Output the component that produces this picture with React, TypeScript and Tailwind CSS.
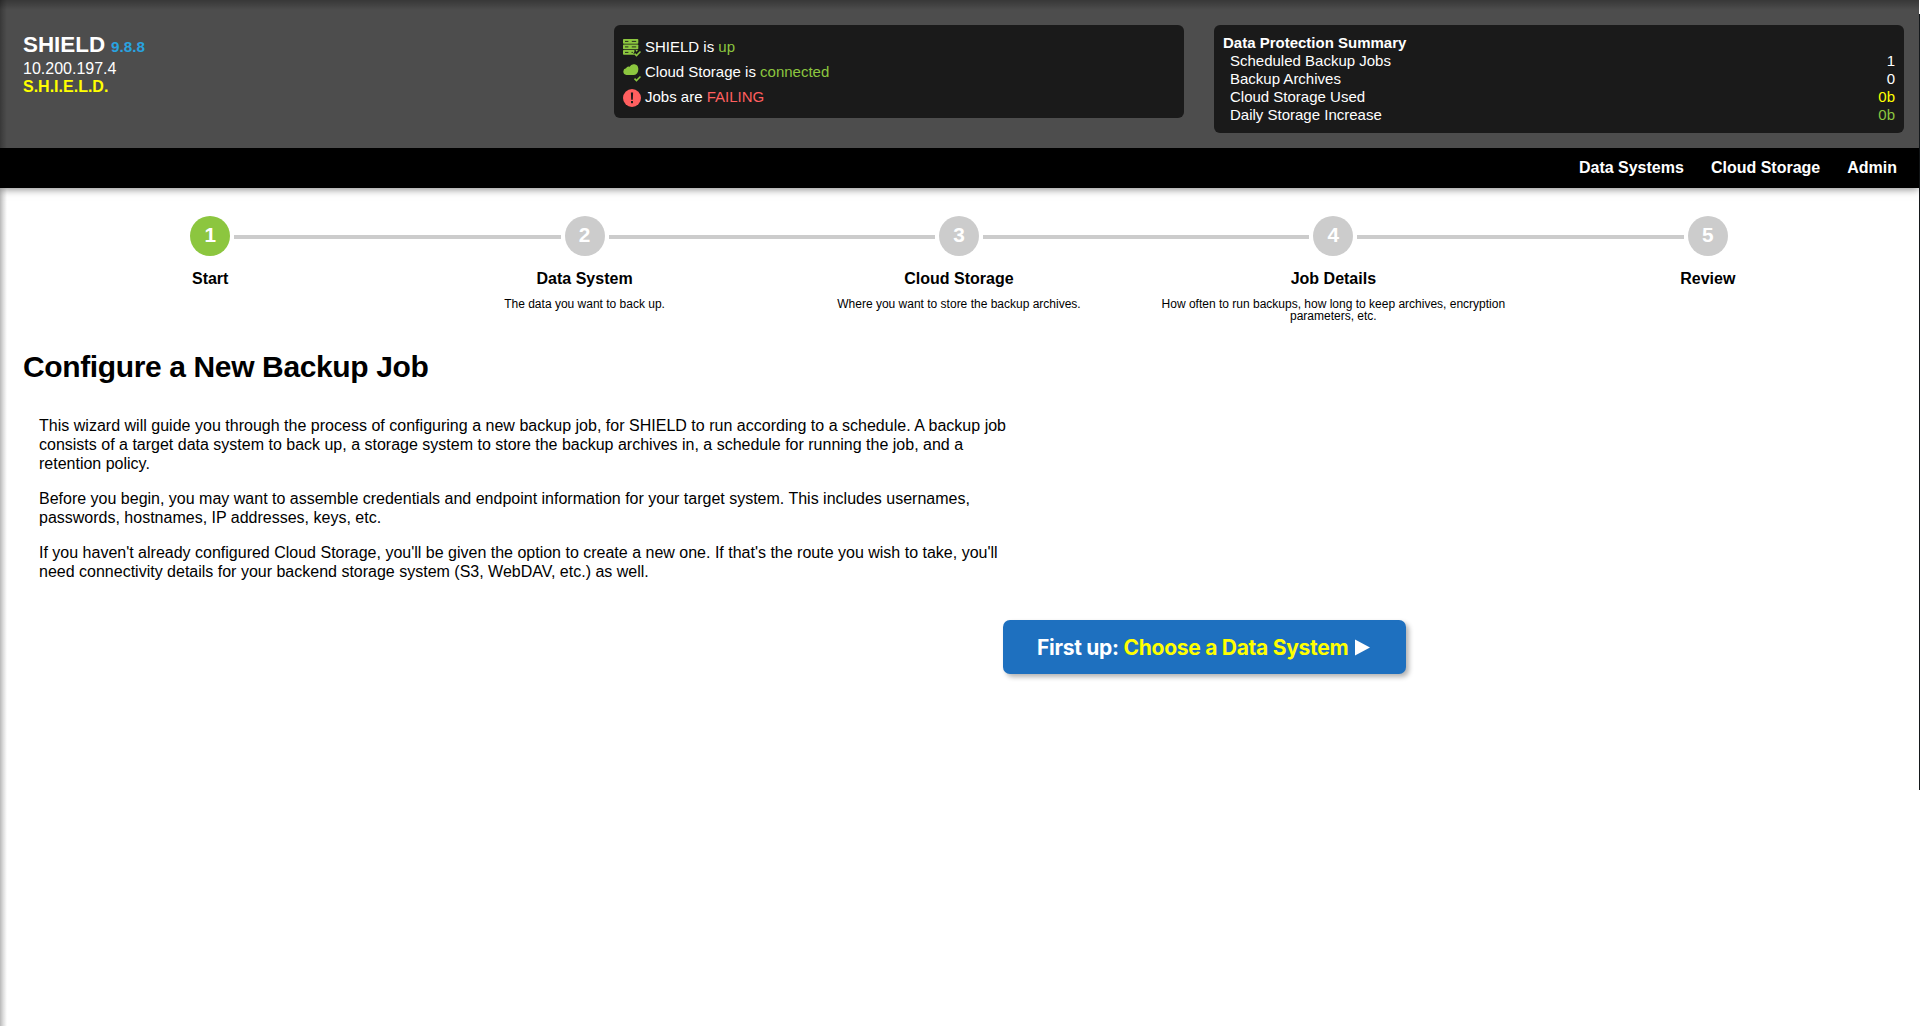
const steps = [
  { title: 'Start', note: '' },
  { title: 'Data System', note: 'The data you want to back up.' },
  { title: 'Cloud Storage', note: 'Where you want to store the backup archives.' },
  {
    title: 'Job Details',
    note: 'How often to run backups, how long to keep archives, encryption parameters, etc.',
  },
  { title: 'Review', note: '' },
];

const summary = [
  { label: 'Scheduled Backup Jobs', value: '1', color: 'text-white' },
  { label: 'Backup Archives', value: '0', color: 'text-white' },
  { label: 'Cloud Storage Used', value: '0b', color: 'text-[#ffff00]' },
  { label: 'Daily Storage Increase', value: '0b', color: 'text-[#8cc63f]' },
];

function Tick() {
  return <path d="M11.5 14.6l2 2 4-4.1" fill="none" stroke="#8cc63f" strokeWidth="1.5" />;
}

function ServerIcon() {
  return (
    <svg width="18" height="18" viewBox="0 0 18 18" className="shrink-0">
      <g fill="#8cc63f">
        <rect x="0" y="0" width="15.3" height="4.8" rx="0.8" />
        <rect x="0" y="5.5" width="15.3" height="4.8" rx="0.8" />
        <path d="M.8 11h10.6v2l-1 1.2 1 1.6H.8a.8.8 0 0 1-.8-.8v-3.2a.8.8 0 0 1 .8-.8z" />
        <path d="M12.6 11h2v.8l-1.3 1z" />
      </g>
      <g stroke="#1a1a1a" strokeWidth="0.9">
        <path d="M2 2.4h3.4M8.8 2.4h4.4M2 7.9h3.4M8.8 7.9h4.4M2 13.4h3.4M8.5 13.4h1.4" />
      </g>
      <Tick />
    </svg>
  );
}

function CloudIcon() {
  return (
    <svg width="18" height="18" viewBox="0 0 18 18" className="shrink-0">
      <path
        d="M3.4 11A3.4 3.4 0 0 1 3 4.3 A3 3 0 0 1 6.6 2.8 A4.6 4.6 0 0 1 15.3 4.4 C15.6 8.2 13.8 10.6 11 11z"
        fill="#8cc63f"
      />
      <Tick />
    </svg>
  );
}

function AlertIcon() {
  return (
    <svg width="18" height="18" viewBox="0 0 18 18" className="shrink-0">
      <circle cx="9" cy="9" r="9" fill="#ff5f5f" />
      <path d="M7.9 3.6h2.2l-.3 7.2H8.2z" fill="#1a1a1a" />
      <rect x="8" y="12" width="2" height="2.2" fill="#1a1a1a" />
    </svg>
  );
}

function Header() {
  return (
    <header className="relative z-10 flex h-[148px] items-start bg-[#4d4d4d] bg-[linear-gradient(to_right,rgba(0,0,0,0.28),rgba(0,0,0,0.14)_3px,transparent_7px),linear-gradient(to_bottom,rgba(0,0,0,0.28),rgba(0,0,0,0.14)_5px,transparent_10px)] pl-[23px] pr-[15px] pt-[25px] text-white">
      <div className="w-[591px] pt-[6px] text-[16px] leading-[18px]">
        <div className="flex h-[29px] items-baseline leading-[28px]">
          <span className="text-[22.4px] font-bold">SHIELD</span>
          <span className="ml-[6px] text-[15.2px] font-bold text-[#29a3e0]">9.8.8</span>
        </div>
        <div>10.200.197.4</div>
        <div className="font-bold text-[#ffff00]">S.H.I.E.L.D.</div>
      </div>
      <div className="flex h-[93px] w-[570px] flex-col rounded-[6px] bg-[#1a1a1a] pl-[9px] pt-[9px] text-[15px]">
        <div className="flex h-[25px] items-center gap-[4px]">
          <span className="mt-[3px]"><ServerIcon /></span>
          <span className="mt-[2px]">SHIELD is <span className="text-[#8cc63f]">up</span></span>
        </div>
        <div className="flex h-[25px] items-center gap-[4px]">
          <span className="mt-[3px]"><CloudIcon /></span>
          <span className="mt-[2px]">Cloud Storage is <span className="text-[#8cc63f]">connected</span></span>
        </div>
        <div className="flex h-[25px] items-center gap-[4px]">
          <span className="mt-[2px]"><AlertIcon /></span>
          <span className="mt-[2px]">Jobs are <span className="text-[#ff5f5f]">FAILING</span></span>
        </div>
      </div>
      <div className="ml-[30px] h-[108px] w-[690px] rounded-[6px] bg-[#1a1a1a] px-[9px] pt-[9px] text-[15px] leading-[18px]">
        <div className="font-bold">Data Protection Summary</div>
        {summary.map((s) => (
          <div key={s.label} className="flex justify-between pl-[7px]">
            <span>{s.label}</span>
            <span className={s.color}>{s.value}</span>
          </div>
        ))}
      </div>
    </header>
  );
}

function Steps() {
  return (
    <ol className="ml-[23px] flex h-[141px] w-[1872px] pt-[28px]">
      {steps.map((s, i) => (
        <li key={s.title} className="flex w-1/5 flex-col items-center text-center">
          <div className="flex w-full items-center">
            <span className={i > 0 ? 'mt-[2px] h-[4px] flex-1 bg-[#cccccc]' : 'flex-1'} />
            <span
              className={
                'mx-[4px] flex size-[40px] items-center justify-center rounded-full pb-[2px] text-[20.8px] font-bold text-white ' +
                (i === 0 ? 'bg-[#8cc63f]' : 'bg-[#cccccc]')
              }
            >
              {i + 1}
            </span>
            <span className={i < steps.length - 1 ? 'mt-[2px] h-[4px] flex-1 bg-[#cccccc]' : 'flex-1'} />
          </div>
          <div className="mt-[14px] text-[16px] font-bold leading-[18px]">{s.title}</div>
          <div className="mt-[10px] w-[350px] text-[12px] leading-[12px]">{s.note}</div>
        </li>
      ))}
    </ol>
  );
}

export default function App() {
  return (
    <div className="flex h-[1026px] w-[1920px] overflow-hidden bg-white font-['Liberation_Sans',Arial,sans-serif] text-black">
      <div className="flex w-[1919px] flex-col">
        <Header />
        <nav className="relative flex h-[40px] shrink-0 items-center justify-end gap-[27px] bg-black pr-[22px] text-[16px] font-bold text-white shadow-[0_1px_8px_rgba(0,0,0,0.5)]">
          <a>Data Systems</a>
          <a>Cloud Storage</a>
          <a>Admin</a>
        </nav>
        <main className="flex-1 bg-[linear-gradient(to_right,rgba(0,0,0,0.28),rgba(0,0,0,0.14)_3px,transparent_7px)]">
          <Steps />
          <h1 className="ml-[23px] mt-[20px] text-[30px] font-bold leading-[36px] tracking-[-0.37px]">Configure a New Backup Job</h1>
          <div className="ml-[39px] mt-[31px] flex w-[980px] flex-col gap-[16px] text-[16px] leading-[19px]">
            <p>
              <span className="tracking-[0.015px]">This wizard will guide you through the process of configuring a new backup job, for SHIELD to run according to a schedule. A backup job</span>
              <br />
              consists of a target data system to back up, a storage system to store the backup archives in, a schedule for running the job, and a
              <br />
              retention policy.
            </p>
            <p>
              Before you begin, you may want to assemble credentials and endpoint information for your target system. This includes usernames,
              <br />
              passwords, hostnames, IP addresses, keys, etc.
            </p>
            <p>
              If you haven't already configured Cloud Storage, you'll be given the option to create a new one. If that's the route you wish to take, you'll
              <br />
              need connectivity details for your backend storage system (S3, WebDAV, etc.) as well.
            </p>
          </div>
          <button className="ml-[1003px] mt-[39px] flex h-[54px] w-[403px] items-center rounded-[7px] bg-[#1e70bf] pl-[34px] pt-[2px] font-[Inter] text-[21px] font-bold tracking-[-0.28px] text-white shadow-[3px_3px_5px_rgba(0,0,0,0.3)]">
            <span className="whitespace-pre">First up: <span className="text-[#ffff00]">Choose a Data System</span></span>
            <svg width="15" height="17" viewBox="0 0 15 17" className="mb-[2px] ml-[7px]">
              <path d="M0 .5L15 8.5 0 16.5z" fill="white" />
            </svg>
          </button>
        </main>
      </div>
      <div className="mt-[14px] h-[776px] w-px bg-[#15191c]" />
    </div>
  );
}
